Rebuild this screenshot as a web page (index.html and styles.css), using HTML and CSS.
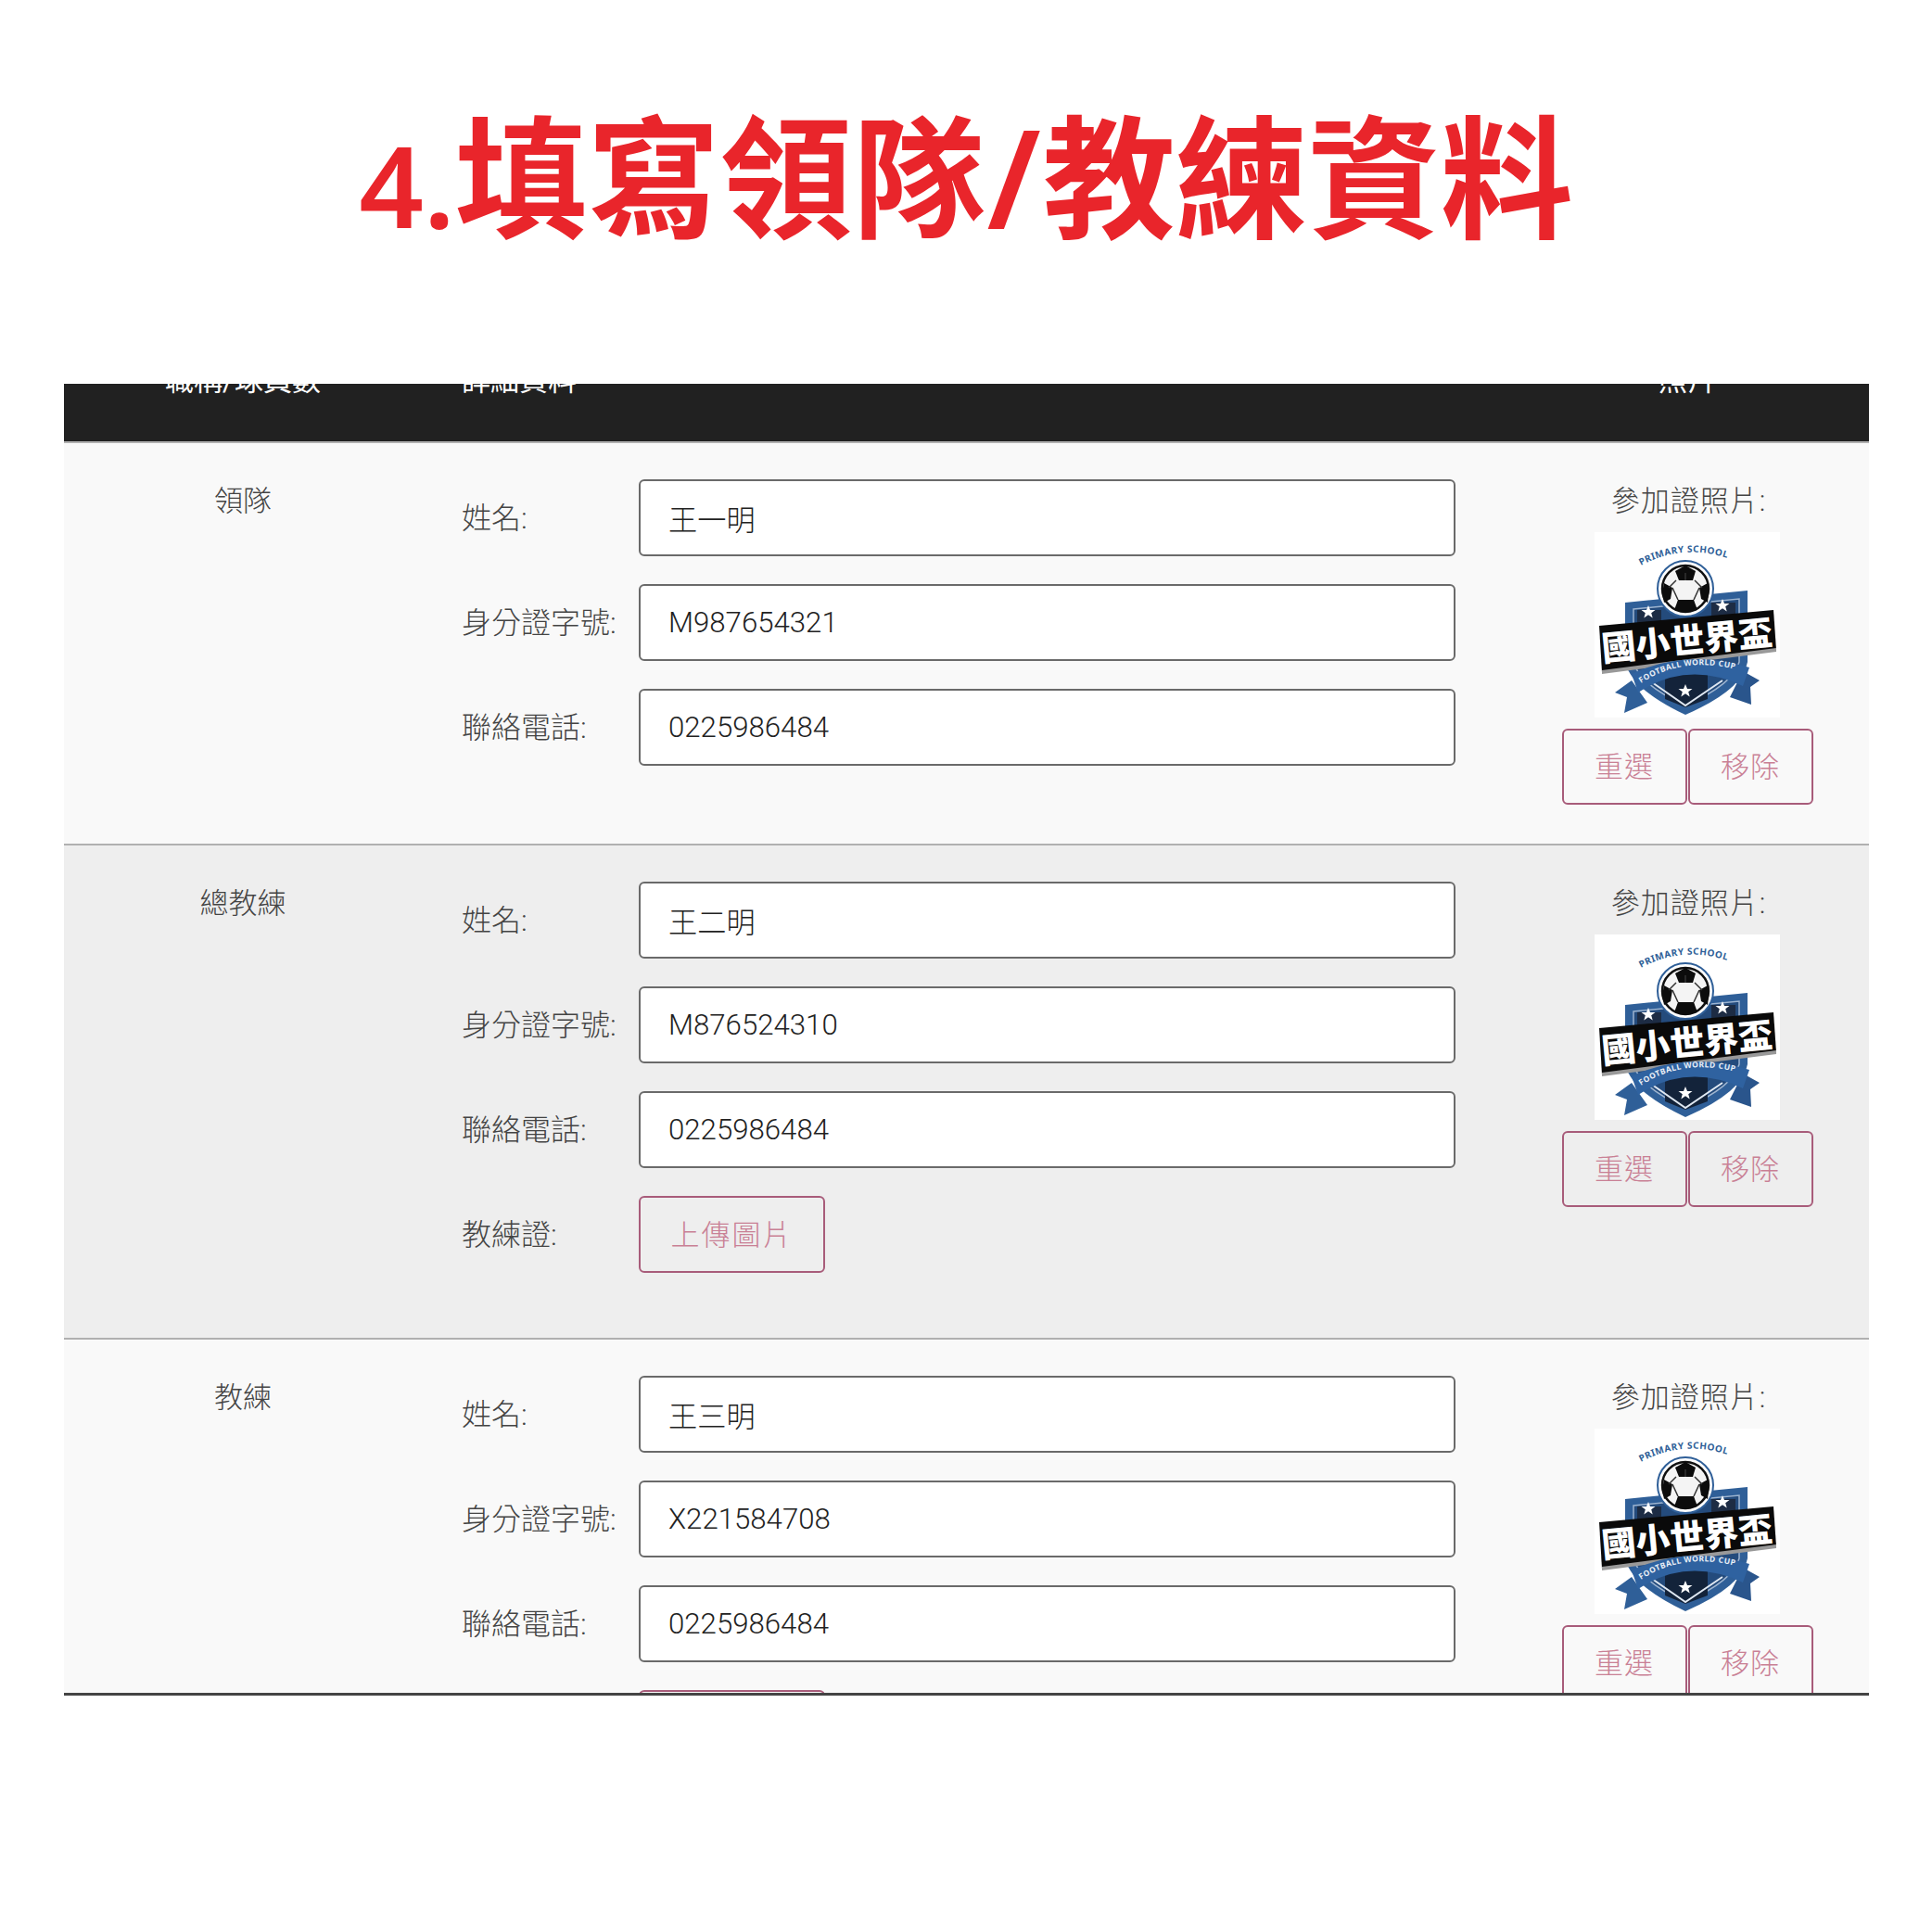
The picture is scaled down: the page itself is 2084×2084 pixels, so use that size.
FILE: index.html
```html
<!DOCTYPE html>
<html lang="zh-Hant">
<head>
    <meta charset="UTF-8">
    <meta name="viewport" content="width=device-width, initial-scale=1.0">
    <title>填寫領隊/教練資料</title>
    <link rel="stylesheet" href="styles.css">
</head>
<body>
    <svg class="logo-defs" width="0" height="0">
        <defs>
            <path id="arcTop" d="M50 36 Q98 10 152 31"></path>
            <path id="arcRibbon" d="M50 163 Q100 130 166 152"></path>
            <polygon id="star" points="0,-7 2,-2 7.500,-2 3.200,1.200 4.700,6.500 0,3.300 -4.700,6.500 -3.200,1.200 -7.500,-2 -2,-2"></polygon>
            <symbol id="cupLogo" viewBox="0 0 200 200">
                <rect width="200" height="200" fill="#fff"></rect>
                <!-- shield -->
                <path d="M33 76 L165 63 L165 140 Q160 170 98 197 Q40 170 33 140 Z" fill="#2f5f98"></path>
                <path d="M42 83 L156 72 L156 140 Q150 164 98 187 Q48 164 42 140 Z" fill="#244b7c" stroke="#9db4d0" stroke-width="1.500"></path>
                <path d="M46 84 H72 V120 H46 Z M126 76 H152 V115 H126 Z" fill="#1d2c44"></path>
                <path d="M76 148 H122 V180 L98 189 L76 180 Z" fill="#13233a"></path>
                <path d="M62 162 L98 187 L138 160" fill="none" stroke="#dfe8f2" stroke-width="2"></path>
                <use href="#star" x="58" y="86" fill="#fff"></use>
                <use href="#star" x="138" y="79" fill="#fff"></use>
                <use href="#star" x="98" y="171" fill="#fff"></use>
                <!-- ball -->
                <circle cx="98" cy="61" r="30" fill="#fff" stroke="#2f5f98" stroke-width="2"></circle>
                <circle cx="98" cy="61" r="25" fill="#f4f4f4" stroke="#111" stroke-width="2.500"></circle>
                <polygon points="98,36 109,42 106,52 91,52 87,42" fill="#0c0c0c"></polygon>
                <polygon points="75,55 84,60 82,72 75,76 73,66" fill="#0c0c0c"></polygon>
                <polygon points="122,55 113,60 115,72 122,76 123,66" fill="#0c0c0c"></polygon>
                <polygon points="90,73 107,73 111,84 98,87 86,84" fill="#0c0c0c"></polygon>
                <path d="M98 52 V44 M88 52 L80 60 M108 52 L116 60 M84 60 L90 73 M113 60 L107 73" stroke="#333" stroke-width="1.500"></path>
                <!-- name banner -->
                <polygon points="5,101 193,84 196,127 8,151" fill="#0a0a0a"></polygon>
                <polygon points="8,149 196,125 196,129 8,153" fill="#999"></polygon>
                <text class="logo-name" x="9" y="139" transform="rotate(-5.500 9 139)">國小世界盃</text>
                <!-- ribbon -->
                <polygon points="40,160 22,173 35,178 32,195 57,184" fill="#2f5f98"></polygon>
                <polygon points="160,150 178,160 168,167 169,186 146,178" fill="#2a558c"></polygon>
                <path d="M40 153 Q100 125 167 146 L160 166 Q100 138 47 173 Z" fill="#2f62a0"></path>
                <text class="logo-small logo-small-ribbon"><textPath href="#arcRibbon">FOOTBALL WORLD CUP</textPath></text>
                <text class="logo-small logo-small-top"><textPath href="#arcTop">PRIMARY SCHOOL</textPath></text>
            </symbol>
        </defs>
    </svg>

    <h1 class="page-title"><span class="title-latin">4.</span>填寫領隊<span class="title-latin title-slash">/</span>教練資料</h1>

    <div class="table-frame">
        <div class="table-scroll">
            <div class="row head-row">
                <div class="head-cell">職稱/球員數</div>
                <div class="head-cell head-left">詳細資料</div>
                <div class="head-cell">照片</div>
            </div>

            <div class="row row-light">
                <div class="role">領隊</div>
                <div class="details">
                    <div class="field"><label>姓名:</label><input type="text" value="王一明"></div>
                    <div class="field"><label>身分證字號:</label><input type="text" value="M987654321"></div>
                    <div class="field"><label>聯絡電話:</label><input type="text" value="0225986484"></div>
                </div>
                <div class="photo">
                    <div class="photo-label">參加證照片:</div>
                    <svg class="photo-img"><use href="#cupLogo"></use></svg>
                    <div class="photo-btns"><button class="btn">重選</button><button class="btn">移除</button></div>
                </div>
            </div>

            <div class="row row-grey">
                <div class="role">總教練</div>
                <div class="details">
                    <div class="field"><label>姓名:</label><input type="text" value="王二明"></div>
                    <div class="field"><label>身分證字號:</label><input type="text" value="M876524310"></div>
                    <div class="field"><label>聯絡電話:</label><input type="text" value="0225986484"></div>
                    <div class="field"><label>教練證:</label><button class="btn btn-upload">上傳圖片</button></div>
                </div>
                <div class="photo">
                    <div class="photo-label">參加證照片:</div>
                    <svg class="photo-img"><use href="#cupLogo"></use></svg>
                    <div class="photo-btns"><button class="btn">重選</button><button class="btn">移除</button></div>
                </div>
            </div>

            <div class="row row-light">
                <div class="role">教練</div>
                <div class="details">
                    <div class="field"><label>姓名:</label><input type="text" value="王三明"></div>
                    <div class="field"><label>身分證字號:</label><input type="text" value="X221584708"></div>
                    <div class="field"><label>聯絡電話:</label><input type="text" value="0225986484"></div>
                    <div class="field"><label>教練證:</label><button class="btn btn-upload">上傳圖片</button></div>
                </div>
                <div class="photo">
                    <div class="photo-label">參加證照片:</div>
                    <svg class="photo-img"><use href="#cupLogo"></use></svg>
                    <div class="photo-btns"><button class="btn">重選</button><button class="btn">移除</button></div>
                </div>
            </div>
        </div>
    </div>
</body>
</html>
```

FILE: styles.css
```css
body {
    margin: 0;
    height: 2084px;
    background: #fff;
    font-family: Roboto, "Noto Sans CJK TC", sans-serif;
    font-weight: 300;
    font-size: 31px;
    color: #444;
}

.logo-defs {
    display: block;
    height: 0;
}

.page-title {
    margin: 0;
    height: 414px;
    padding-top: 92px;
    box-sizing: border-box;
    text-align: center;
    font-family: "Noto Sans CJK TC", sans-serif;
    font-size: 143px;
    line-height: 184px;
    font-weight: 700;
    color: #e9252b;
}

.title-latin {
    font-family: "Noto Sans", sans-serif;
    font-size: 122px;
    font-weight: 600;
}

.title-slash {
    font-size: 146px;
    padding: 0 2px;
}

.table-frame {
    margin: 0 68px 0 69px;
    height: 1412px;
    overflow: hidden;
    border-bottom: 3px solid #444;
}

.table-scroll {
    margin-top: -65px;
}

.row {
    display: grid;
    grid-template-columns: 386px 1fr 392px;
}

.head-row {
    height: 127px;
    padding-top: 40px;
    box-sizing: border-box;
    background: #212121;
    color: #fff;
    font-weight: 400;
    line-height: 44px;
}

.head-cell {
    text-align: center;
}

.head-cell.head-left {
    text-align: left;
    padding-left: 43px;
}

.row-light,
.row-grey {
    padding: 39px 0 42px;
    border-top: 2px solid #b0b0b0;
}

.row-light {
    background: #f9f9f9;
}

.row-grey {
    background: #eee;
}

.role {
    text-align: center;
    line-height: 48px;
}

.details {
    display: flex;
    flex-direction: column;
    gap: 30px;
    padding: 0 54px 28px 43px;
}

.field {
    display: flex;
    align-items: center;
    height: 83px;
}

.field label {
    flex: 0 0 191px;
    padding-bottom: 5px;
    font-size: 32px;
}

.field input {
    flex: 1;
    min-width: 0;
    height: 83px;
    box-sizing: border-box;
    padding: 0 30px;
    border: 2px solid #6a6a6a;
    border-radius: 6px;
    background: #fff;
    font: inherit;
    font-size: 31.200px;
    color: #222;
}

.photo {
    display: flex;
    flex-direction: column;
    align-items: center;
}

.photo-label {
    line-height: 48px;
    letter-spacing: 1px;
    padding-left: 3px;
}

.photo-img {
    display: block;
    width: 200px;
    height: 200px;
    margin: 9px 0 12px;
}

.photo-btns {
    display: flex;
    gap: 1px;
}

.btn {
    width: 135px;
    height: 82px;
    padding: 0 0 5px;
    border: 2px solid #a85c7a;
    border-radius: 6px;
    background: transparent;
    font: inherit;
    color: #c98095;
    letter-spacing: 1px;
}

.btn-upload {
    width: 201px;
    height: 83px;
    letter-spacing: 2px;
}

.logo-name {
    font-family: "Noto Sans CJK TC", sans-serif;
    font-weight: 900;
    font-size: 37px;
    fill: #fff;
}

.logo-small {
    font-family: "Noto Sans", sans-serif;
    font-weight: 700;
    letter-spacing: 0.5px;
}

.logo-small-top {
    font-size: 10px;
    fill: #2f5f98;
}

.logo-small-ribbon {
    font-size: 8.500px;
    fill: #e8eef6;
}
```
